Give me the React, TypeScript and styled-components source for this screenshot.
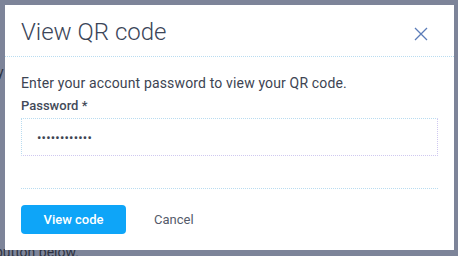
import React from "react";
import styled, { createGlobalStyle } from "styled-components";

const Global = createGlobalStyle`
  html, body { margin: 0; padding: 0; }
  body {
    width: 458px;
    height: 256px;
    overflow: hidden;
    background: #7d8499;
    font-family: Roboto, "Noto Sans", Arial, sans-serif;
  }
`;

const Page = styled.div`
  position: relative;
  width: 458px;
  height: 256px;
  overflow: hidden;
`;

const PageText = styled.div<{ $top: number; $left: number }>`
  position: absolute;
  top: ${(p) => p.$top}px;
  left: ${(p) => p.$left}px;
  font-size: 14px;
  color: #2d3240;
  white-space: nowrap;
`;

const Modal = styled.div`
  position: absolute;
  top: 5px;
  left: 5px;
  width: 449px;
  height: 245px;
  background: #ffffff;
  display: flex;
  flex-direction: column;
`;

const Header = styled.div`
  height: 51px;
  display: flex;
  align-items: center;
  justify-content: space-between;
  padding: 0 25px 0 16px;
  border-bottom: 1px dotted #b9dcf0;
`;

const Title = styled.h2`
  margin: 0;
  font-size: 24px;
  font-weight: 300;
  color: #3b4558;
  padding-top: 2px;
`;

const CloseButton = styled.button`
  border: none;
  background: none;
  padding: 0;
  width: 16px;
  height: 16px;
  display: flex;
  align-items: center;
  justify-content: center;
  cursor: pointer;
  margin-top: 6px;
`;

const Body = styled.div`
  padding: 16px 16px 0 16px;
  display: flex;
  flex-direction: column;
`;

const Intro = styled.p`
  margin: 0;
  font-size: 14px;
  letter-spacing: 0.15px;
  color: #3d4452;
  line-height: 20px;
`;

const Label = styled.label`
  margin-top: 4px;
  font-size: 13px;
  font-weight: 500;
  color: #434a59;
  line-height: 18px;
`;

const Input = styled.input`
  margin-top: 3px;
  box-sizing: border-box;
  width: 417px;
  height: 38px;
  border: 1px dotted #cfc8f0;
  border-top-color: #b9dcf0;
  border-left-color: #b9dcf0;
  padding: 0 15px;
  font-size: 13px;
  color: #3d4452;
  letter-spacing: 0.2px;
  outline: none;
  font-family: Roboto, Arial, sans-serif;
`;

const Divider = styled.div`
  margin-top: 32px;
  width: 417px;
  border-top: 1px dotted #b9dcf0;
`;

const Footer = styled.div`
  display: flex;
  align-items: center;
  gap: 28px;
  padding: 16px 16px 0 16px;
`;

const PrimaryButton = styled.button`
  width: 105px;
  height: 29px;
  border: none;
  border-radius: 4px;
  background: #0ea5f8;
  color: #ffffff;
  font-family: Roboto, Arial, sans-serif;
  font-size: 13px;
  font-weight: 500;
  cursor: pointer;
`;

const LinkButton = styled.button`
  border: none;
  background: none;
  padding: 0;
  color: #545b6b;
  font-family: Roboto, Arial, sans-serif;
  font-size: 13px;
  cursor: pointer;
`;

export default function App() {
  return (
    <>
      <Global />
      <Page>
        <PageText $top={64} $left={-3}>y</PageText>
        <PageText $top={244} $left={-5}>button below.</PageText>
        <Modal>
          <Header>
            <Title>View QR code</Title>
            <CloseButton aria-label="Close">
              <svg width="14" height="14" viewBox="0 0 14 14">
                <path d="M1 1 L13 13 M13 1 L1 13" stroke="#5b7cb8" strokeWidth="1.3" fill="none" />
              </svg>
            </CloseButton>
          </Header>
          <Body>
            <Intro>Enter your account password to view your QR code.</Intro>
            <Label>Password *</Label>
            <Input type="password" defaultValue="abcdefghijkl" />
            <Divider />
          </Body>
          <Footer>
            <PrimaryButton>View code</PrimaryButton>
            <LinkButton>Cancel</LinkButton>
          </Footer>
        </Modal>
      </Page>
    </>
  );
}
